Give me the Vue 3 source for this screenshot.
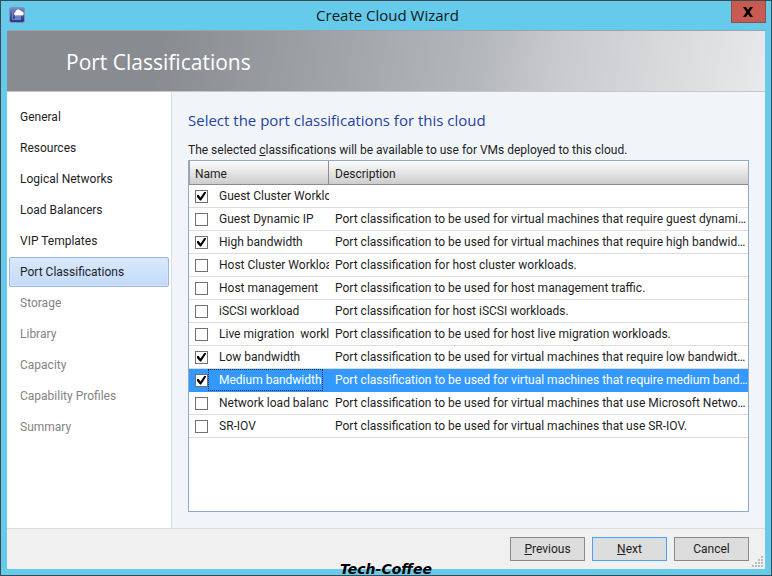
<template>
  <div class="window">
    <header class="title-bar">
      <svg class="app-icon" viewBox="0 0 16 16" aria-hidden="true">
        <defs>
          <linearGradient id="iconFill" x1="0" y1="0" x2="0" y2="1">
            <stop offset="0" stop-color="#7f8fca" />
            <stop offset="0.5" stop-color="#40559f" />
            <stop offset="1" stop-color="#2b367c" />
          </linearGradient>
        </defs>
        <rect x="0.5" y="0.5" width="15" height="15" rx="2" fill="url(#iconFill)" stroke="#8590b4" />
        <path d="M3.500 4v8.500h3" fill="none" stroke="#7185c4" stroke-width="1" />
        <path d="M6 9h6v4H6z" fill="#6f82c6" />
        <path d="M6 8.500a2 2 0 0 1 .3-3.600A3 3 0 0 1 12 4.200a2.300 2.300 0 0 1 1.500 4.300z" fill="#fff" />
      </svg>
      <h1 class="window-title">Create Cloud Wizard</h1>
      <button class="close-button" type="button" aria-label="Close">
        <svg viewBox="0 0 12 10" aria-hidden="true">
          <path d="M1 0h3l2 3 2-3h3L7.600 5 11 10H8L6 7l-2 3H1l3.400-5z" fill="#000" />
        </svg>
      </button>
    </header>

    <div class="client">
      <div class="banner">
        <h2 class="banner-title">Port Classifications</h2>
      </div>

      <div class="body">
        <nav class="steps">
          <a
            v-for="(step, index) in steps"
            :key="step"
            href="#"
            class="step"
            :class="{ current: index === currentStep, pending: index > currentStep }"
            @click.prevent
            >{{ step }}</a
          >
        </nav>

        <main class="page">
          <h3 class="page-title">Select the port classifications for this cloud</h3>
          <p class="page-text">
            The selected <u>c</u>lassifications will be available to use for VMs deployed to this cloud.
          </p>
          <div class="list">
            <table class="grid">
              <thead>
                <tr>
                  <th class="name-col">Name</th>
                  <th>Description</th>
                </tr>
              </thead>
              <tbody>
                <tr
                  v-for="(item, index) in items"
                  :key="item.name"
                  :class="{ selected: index === selectedRow }"
                  @click="selectedRow = index"
                >
                  <td class="name-cell">
                    <div class="name-wrap">
                      <input :id="'port-' + index" v-model="item.checked" type="checkbox" class="check" />
                      <label :for="'port-' + index" class="name">{{ item.name }}</label>
                    </div>
                  </td>
                  <td class="description">{{ item.description }}</td>
                </tr>
              </tbody>
            </table>
          </div>
        </main>
      </div>

      <footer class="footer">
        <button class="button" type="button"><u>P</u>revious</button>
        <button class="button default" type="button"><u>N</u>ext</button>
        <button class="button" type="button">Cancel</button>
        <svg class="grip" viewBox="0 0 12 12" aria-hidden="true">
          <path
            d="M9 0h2v2H9zM6 3h2v2H6zM9 3h2v2H9zM3 6h2v2H3zM6 6h2v2H6zM9 6h2v2H9zM0 9h2v2H0zM3 9h2v2H3zM6 9h2v2H6zM9 9h2v2H9z"
            fill="#bcbcbc"
          />
        </svg>
      </footer>
    </div>

    <span class="watermark">Tech-Coffee</span>
  </div>
</template>

<script setup>
import { ref } from "vue";

const steps = [
  "General",
  "Resources",
  "Logical Networks",
  "Load Balancers",
  "VIP Templates",
  "Port Classifications",
  "Storage",
  "Library",
  "Capacity",
  "Capability Profiles",
  "Summary",
];
const currentStep = 5;

const selectedRow = ref(8);

const items = ref([
  { name: "Guest Cluster Workloads", checked: true, description: "" },
  {
    name: "Guest Dynamic IP",
    checked: false,
    description: "Port classification to be used for virtual machines that require guest dynamic IP.",
  },
  {
    name: "High bandwidth",
    checked: true,
    description: "Port classification to be used for virtual machines that require high bandwidth networking.",
  },
  {
    name: "Host Cluster Workloads",
    checked: false,
    description: "Port classification for host cluster workloads.",
  },
  {
    name: "Host management",
    checked: false,
    description: "Port classification to be used for host management traffic.",
  },
  {
    name: "iSCSI workload",
    checked: false,
    description: "Port classification for host iSCSI workloads.",
  },
  {
    name: "Live migration  workload",
    checked: false,
    description: "Port classification to be used for host live migration workloads.",
  },
  {
    name: "Low bandwidth",
    checked: true,
    description: "Port classification to be used for virtual machines that require low bandwidth networking.",
  },
  {
    name: "Medium bandwidth",
    checked: true,
    description: "Port classification to be used for virtual machines that require medium bandwidth networking.",
  },
  {
    name: "Network load balancing",
    checked: false,
    description: "Port classification to be used for virtual machines that use Microsoft Network Load Balancing.",
  },
  {
    name: "SR-IOV",
    checked: false,
    description: "Port classification to be used for virtual machines that use SR-IOV.",
  },
]);
</script>

<style>
body {
  margin: 0;
}
</style>

<style scoped>
.window {
  position: relative;
  box-sizing: border-box;
  min-height: 100vh;
  display: flex;
  flex-direction: column;
  padding: 0 6px 6px;
  border: 1px solid #3c4a52;
  background: #66caea;
  font-family: Roboto, "Open Sans", sans-serif;
  font-size: 12px;
  line-height: 16px;
  color: #1e1e1e;
}

.title-bar {
  display: flex;
  justify-content: space-between;
  align-items: flex-start;
  height: 29px;
}

.app-icon {
  width: 16px;
  height: 16px;
  margin: 6px 19px 0 2px;
}

.window-title {
  margin: 0;
  font-family: "Open Sans", sans-serif;
  font-size: 15px;
  font-weight: 400;
  line-height: 28px;
  color: #101820;
}

.close-button {
  display: flex;
  justify-content: center;
  align-items: center;
  width: 35px;
  height: 22px;
  margin-right: -1px;
  padding: 0;
  border: 1px solid #8f4a4c;
  border-top: none;
  background: #c75b52;
}

.close-button svg {
  width: 12px;
  height: 10px;
}

.client {
  flex: 1;
  display: flex;
  flex-direction: column;
  background: #f1f5f9;
}

.banner {
  box-sizing: border-box;
  height: 62px;
  padding-left: 59px;
  border-top: 1px solid #98a5ab;
  border-bottom: 1px solid #c4c6c8;
  background: linear-gradient(100deg, #888c90 0%, #888c90 20%, #b4b8bb 62%, #c8c9cc 72%, #e8e9ea 100%);
}

.banner-title {
  margin: 0;
  font-family: "Open Sans", sans-serif;
  font-size: 21px;
  font-weight: 400;
  line-height: 62px;
  color: #fff;
}

.body {
  flex: 1;
  display: flex;
}

.steps {
  flex: none;
  box-sizing: border-box;
  width: 165px;
  padding: 10px 2px 0;
  border-right: 1px solid #dcdfe2;
  background: #fff;
}

.step {
  display: block;
  box-sizing: border-box;
  height: 30px;
  margin-bottom: 1px;
  padding-left: 10px;
  border: 1px solid transparent;
  border-radius: 2px;
  line-height: 29px;
  color: #1e1e1e;
  text-decoration: none;
}

.step.current {
  border-color: #9ab8e0;
  background: linear-gradient(#dbe9fc, #c1dafa);
  box-shadow: inset 0 0 0 1px #d5e5fa;
}

.step.pending {
  color: #838383;
}

.page {
  flex: 1;
  min-width: 0;
  display: flex;
  flex-direction: column;
  padding: 16px;
}

.page-title {
  margin: 0 0 10px;
  font-family: "Open Sans", sans-serif;
  font-size: 15px;
  font-weight: 400;
  line-height: 24px;
  color: #2444a0;
}

.page-text {
  margin: 0 0 2px;
}

.list {
  flex: 1;
  border: 1px solid #8eacca;
  background: #fff;
}

.grid {
  width: 100%;
  table-layout: fixed;
  border-collapse: separate;
  border-spacing: 0;
}

.grid th {
  box-sizing: border-box;
  height: 24px;
  padding: 2px 6px 0;
  border-bottom: 1px solid #8c8c8c;
  background: linear-gradient(#fdfdfd, #cdcdcd);
  font-weight: 400;
  text-align: left;
}

.grid .name-col {
  width: 140px;
  padding-left: 5px;
  border-left: 1px solid #a0a0a0;
  border-right: 1px solid #8c8c8c;
}

.grid td {
  box-sizing: border-box;
  height: 23px;
  padding: 0;
  border-bottom: 1px solid #dcdcdc;
}

.name-wrap {
  display: flex;
  align-items: center;
  height: 22px;
  padding-left: 6px;
  overflow: hidden;
}

.check {
  appearance: none;
  flex: none;
  display: grid;
  place-items: center;
  width: 13px;
  height: 13px;
  margin: 0;
  border: 1px solid #707070;
  background: #fff;
}

.check:checked::before {
  content: "";
  width: 9px;
  height: 9px;
  background: #000;
  clip-path: polygon(0 40%, 18% 40%, 40% 66%, 84% 0, 100% 0, 100% 18%, 46% 100%, 34% 100%, 0 62%);
}

.name {
  flex: none;
  padding: 2px 0 2px 10px;
  border: 1px dotted transparent;
  white-space: pre;
}

.grid .description {
  padding: 0 0 0 6px;
  overflow: hidden;
  text-overflow: ellipsis;
  white-space: nowrap;
}

.selected td {
  border-color: #3399ff;
  background: #3399ff;
  color: #fff;
}

.selected .name {
  border-color: #102a50;
}

.footer {
  position: relative;
  display: flex;
  justify-content: flex-end;
  gap: 7px;
  padding: 8px 16px;
  border-top: 1px solid #dcdcdc;
  background: #f0f0f0;
}

.button {
  box-sizing: border-box;
  width: 75px;
  height: 24px;
  padding: 0;
  border: 1px solid #8a8a8a;
  background: #dddddd;
  font: inherit;
  color: #1e1e1e;
}

.button.default {
  border-color: #4ba3f7;
}

.grip {
  position: absolute;
  right: 1px;
  bottom: 1px;
  width: 12px;
  height: 12px;
}

/* Signature laid over the bottom frame */
.watermark {
  position: absolute;
  bottom: -2px;
  left: 50%;
  transform: translateX(-50%);
  font-family: "DejaVu Sans", sans-serif;
  font-size: 14px;
  font-style: italic;
  font-weight: 700;
  line-height: 16px;
  color: #000;
}
</style>
